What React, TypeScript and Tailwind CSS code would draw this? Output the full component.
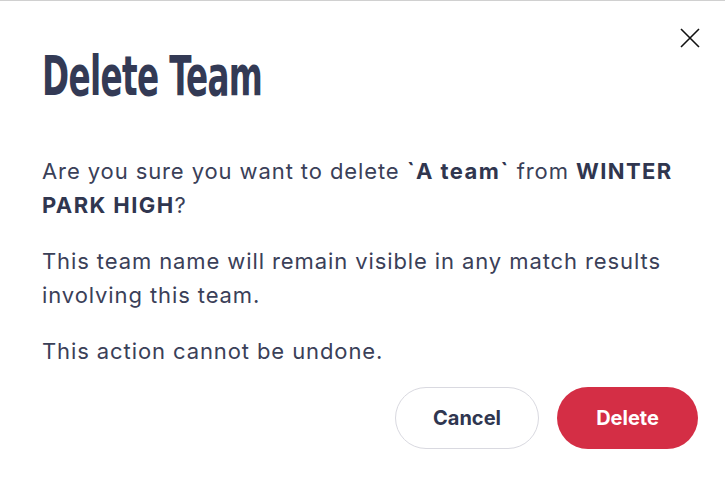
import { type ReactElement } from 'react';

function CloseIcon() {
    return (
        <svg width="22" height="22" viewBox="0 0 22 22" fill="none" stroke="#111" strokeWidth="1.6">
            <path d="M2 2L20 20M20 2L2 20" />
        </svg>
    );
}

export default function App(): ReactElement {
    return (
        <div className="w-[725px] h-[477px] bg-white border-t border-[#d0d0d0] font-['Inter','Liberation_Sans',sans-serif] text-[#3a4058] overflow-hidden">
            <div className="flex justify-end pt-[26px] pr-[24px]">
                <button type="button" aria-label="Close" className="p-0">
                    <CloseIcon />
                </button>
            </div>

            <div className="px-[42px]">
                {/* Title - condensed heavy face */}
                <h2 className="-mt-[3px] h-[60px] text-[#333a55] font-['Liberation_Sans_Narrow','DejaVu_Sans_Condensed',sans-serif] font-bold text-[55px] leading-[60px] tracking-[-1px] origin-left scale-x-[0.66] whitespace-nowrap">
                    Delete Team
                </h2>

                <div className="mt-[48px] max-w-[642px] text-[22px] leading-[34px] tracking-[0.9px]">
                    <p>
                        Are you sure you want to delete{' '}
                        <b className="font-bold text-[#30364f] tracking-[1.4px]">`A team`</b> from{' '}
                        <b className="font-bold text-[#30364f] tracking-[1.4px]">WINTER PARK HIGH</b>?
                    </p>
                    <p className="mt-[22px]">This team name will remain visible in any match results involving this team.</p>
                    <p className="mt-[22px]">This action cannot be undone.</p>
                </div>
            </div>

            {/* Actions */}
            <div className="flex justify-end gap-[18px] pr-[27px] mt-[19px]">
                <button
                    type="button"
                    className="w-[144px] h-[62px] rounded-full border border-[#d9d9e0] bg-white text-[#2f3650] text-[20px] font-bold">
                    Cancel
                </button>
                <button
                    type="button"
                    className="w-[141px] h-[62px] rounded-full bg-[#d42e45] text-white text-[20px] font-bold">
                    Delete
                </button>
            </div>
        </div>
    );
}
